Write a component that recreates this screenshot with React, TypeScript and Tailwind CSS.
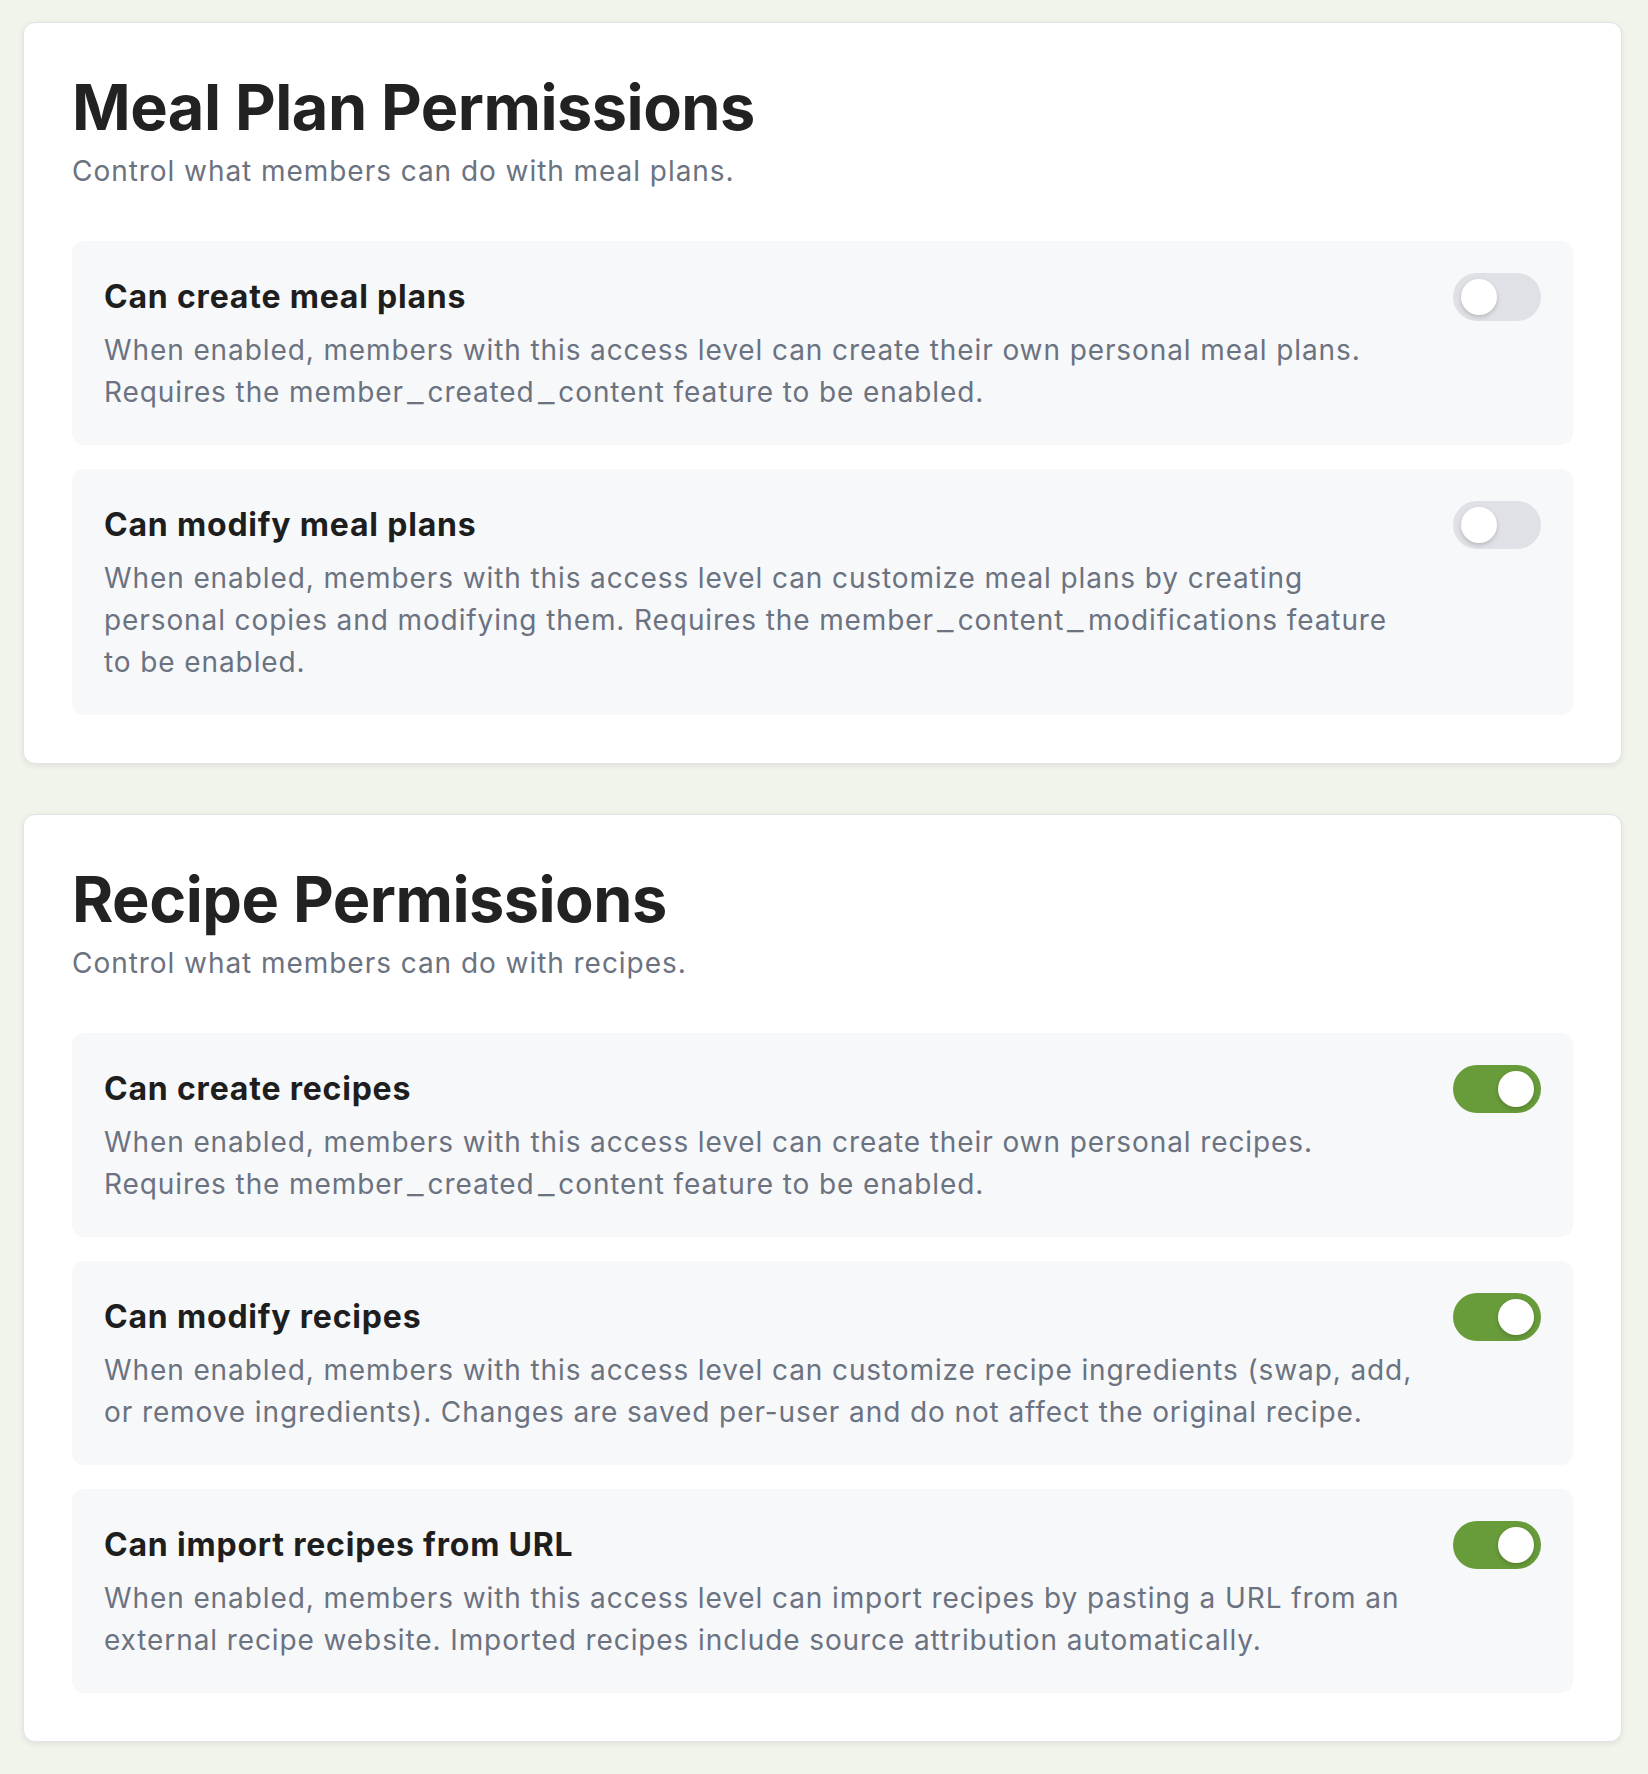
import React, { useState } from "react";

type Permission = {
  id: string;
  label: string;
  description: string;
  enabled: boolean;
};

type Section = {
  title: string;
  subtitle: string;
  items: Permission[];
};

const sections: Section[] = [
  {
    title: "Meal Plan Permissions",
    subtitle: "Control what members can do with meal plans.",
    items: [
      {
        id: "create_meal_plans",
        label: "Can create meal plans",
        description:
          "When enabled, members with this access level can create their own personal meal plans. Requires the member_created_content feature to be enabled.",
        enabled: false,
      },
      {
        id: "modify_meal_plans",
        label: "Can modify meal plans",
        description:
          "When enabled, members with this access level can customize meal plans by creating personal copies and modifying them. Requires the member_content_modifications feature to be enabled.",
        enabled: false,
      },
    ],
  },
  {
    title: "Recipe Permissions",
    subtitle: "Control what members can do with recipes.",
    items: [
      {
        id: "create_recipes",
        label: "Can create recipes",
        description:
          "When enabled, members with this access level can create their own personal recipes. Requires the member_created_content feature to be enabled.",
        enabled: true,
      },
      {
        id: "modify_recipes",
        label: "Can modify recipes",
        description:
          "When enabled, members with this access level can customize recipe ingredients (swap, add, or remove ingredients). Changes are saved per-user and do not affect the original recipe.",
        enabled: true,
      },
      {
        id: "import_recipes",
        label: "Can import recipes from URL",
        description:
          "When enabled, members with this access level can import recipes by pasting a URL from an external recipe website. Imported recipes include source attribution automatically.",
        enabled: true,
      },
    ],
  },
];

const renderDescription = (text: string) =>
  text.split("_").map((part, i) => (
    <React.Fragment key={i}>
      {i > 0 && <span className="inline-block mx-[5px] scale-x-[1.3]">_</span>}
      {part}
    </React.Fragment>
  ));

const Toggle = ({ on, onChange, label }: { on: boolean; onChange: () => void; label: string }) => (
  <button
    type="button"
    role="switch"
    aria-checked={on}
    aria-label={label}
    onClick={onChange}
    className={`relative shrink-0 w-[88px] h-[48px] rounded-full transition-colors ${
      on ? "bg-[#689b3a]" : "bg-[#dfe1e6]"
    }`}
  >
    <span
      className={`absolute top-[6px] w-[36px] h-[36px] rounded-full bg-white shadow-[0_2px_4px_rgba(0,0,0,0.18)] transition-all ${
        on ? "left-[45px]" : "left-[8px]"
      }`}
    />
  </button>
);

export default function App() {
  const [state, setState] = useState<Record<string, boolean>>(() => {
    const init: Record<string, boolean> = {};
    sections.forEach((s) => s.items.forEach((i) => (init[i.id] = i.enabled)));
    return init;
  });

  const flip = (id: string) => setState((prev) => ({ ...prev, [id]: !prev[id] }));

  return (
    <div className="min-h-screen bg-[#f1f4eb] pt-[22px] pb-[31px] pl-[23px] pr-[26px] font-['Inter',sans-serif]">
      <div className="flex flex-col gap-[50px]">
        {sections.map((section) => (
          <section
            key={section.title}
            className="bg-white border border-[#e1e3e8] rounded-xl shadow-[0_2px_6px_rgba(0,0,0,0.08)] p-12"
          >
            <h2 className="text-[63px] leading-[72px] font-bold text-[#222222] tracking-[-0.5px]">
              {section.title}
            </h2>
            <p className="mt-[7px] text-[28px] leading-[42px] tracking-[0.95px] text-[#6b7280]">
              {section.subtitle}
            </p>

            <div className="mt-[49px] flex flex-col gap-6">
              {section.items.map((item) => (
                <div key={item.id} className="flex items-start gap-8 rounded-xl bg-[#f7f8fa] p-8">
                  <div className="flex-1 min-w-0">
                    <h3 className="text-[32px] leading-[48px] font-bold tracking-[0.8px] text-[#1e1e1e]">
                      {item.label}
                    </h3>
                    <p className="mt-2 text-[28px] leading-[42px] tracking-[0.9px] text-[#6b7280]">
                      {renderDescription(item.description)}
                    </p>
                  </div>
                  <Toggle on={state[item.id]} onChange={() => flip(item.id)} label={item.label} />
                </div>
              ))}
            </div>
          </section>
        ))}
      </div>
    </div>
  );
}
